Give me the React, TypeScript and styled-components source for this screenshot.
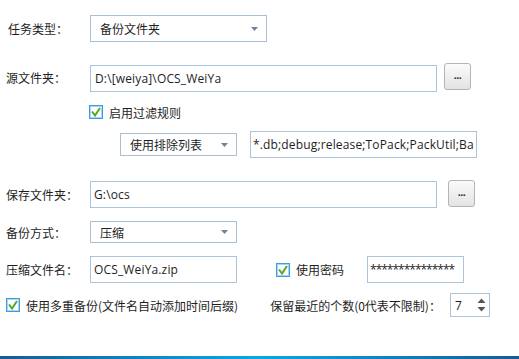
import React from "react";
import styled, { createGlobalStyle } from "styled-components";

const Global = createGlobalStyle`
  html, body { margin: 0; padding: 0; background: #fff; }
  body { font-family: "Open Sans", "Noto Sans CJK SC", sans-serif; font-size: 12px; color: #1e1e1e; }
  * { box-sizing: border-box; }
`;

const Page = styled.div`
  width: 519px;
  height: 359px;
  display: flex;
  flex-direction: column;
  padding-top: 15px;
  background: #fff;
  overflow: hidden;
`;

const Row = styled.div<{ $top?: number; $h: number; $pad?: number; $align?: string }>`
  display: flex;
  align-items: ${(p) => p.$align || "center"};
  margin-top: ${(p) => p.$top || 0}px;
  height: ${(p) => p.$h}px;
  padding-left: ${(p) => p.$pad ?? 6}px;
`;

const Label = styled.div<{ $indent?: number }>`
  width: 84px;
  padding-left: ${(p) => p.$indent || 0}px;
  font-family: "Noto Sans CJK SC", sans-serif;
  font-size: 12px;
  color: #1e1e1e;
  align-self: center;
  white-space: nowrap;
`;

const SelectBox = styled.div<{ $w: number; $h: number }>`
  width: ${(p) => p.$w}px;
  height: ${(p) => p.$h}px;
  border: 1px solid #aac0d6;
  background: #fff;
  display: flex;
  align-items: center;
  justify-content: space-between;
  padding: 0 8px 0 9px;
  font-family: "Noto Sans CJK SC", sans-serif;
  font-size: 12px;
  color: #1e1e1e;
  align-self: center;
`;

const Field = styled.input<{ $w: number; $h?: number; $pl?: number; $ml?: number; $ls?: number }>`
  width: ${(p) => p.$w}px;
  height: ${(p) => p.$h || 27}px;
  margin-left: ${(p) => p.$ml || 0}px;
  border: 1px solid #acc4da;
  background: #fff;
  padding: 0 2px 0 ${(p) => p.$pl ?? 3}px;
  font-family: "Open Sans", "Noto Sans CJK SC", sans-serif;
  font-size: 12px;
  letter-spacing: ${(p) => p.$ls ?? 0.15}px;
  color: #1e1e1e;
  outline: none;
  border-radius: 0;
  flex: none;
`;

const BrowseButton = styled.div<{ $ml: number }>`
  width: 27px;
  height: 27px;
  margin-left: ${(p) => p.$ml}px;
  align-self: flex-start;
  border: 1px solid #b4b4b4;
  border-radius: 3px;
  background: linear-gradient(#fbfbfb, #e3e3e3);
  display: flex;
  align-items: center;
  justify-content: center;
  font-family: "Liberation Sans", sans-serif;
  font-size: 11px;
  font-weight: bold;
  color: #333;
  letter-spacing: -0.5px;
  padding-bottom: 3px;
`;

const Check = styled.label<{ $ml?: number }>`
  display: flex;
  align-items: center;
  gap: 6px;
  margin-left: ${(p) => p.$ml || 0}px;
  font-family: "Noto Sans CJK SC", sans-serif;
  font-size: 12px;
  color: #1e1e1e;
  white-space: nowrap;
`;

const Text = styled.span<{ $ml?: number }>`
  margin-left: ${(p) => p.$ml || 0}px;
  font-family: "Noto Sans CJK SC", sans-serif;
  font-size: 12px;
  color: #1e1e1e;
  white-space: nowrap;
`;

const Spinner = styled.div<{ $ml: number }>`
  width: 40px;
  height: 24px;
  margin-left: ${(p) => p.$ml}px;
  border: 1px solid #acc4da;
  display: flex;
  align-items: center;
  justify-content: space-between;
  padding: 0 3px 0 4px;
  font-family: "Open Sans", sans-serif;
  font-size: 12px;
  color: #1e1e1e;
`;

const BottomBar = styled.div`
  margin-top: auto;
  height: 3px;
  background: linear-gradient(to right, #175b98, #0aa9df 50%, #175b98);
`;

const Arrow = () => (
  <svg width="7" height="4" viewBox="0 0 7 4">
    <path d="M0 0 H7 L3.5 4 Z" fill="#6f8296" />
  </svg>
);

const CheckMark = () => (
  <svg width="14" height="14" viewBox="0 0 14 14">
    <rect x="0.5" y="0.5" width="13" height="13" fill="#fff" stroke="#3c9de2" />
    <rect x="1.5" y="1.5" width="11" height="11" fill="none" stroke="#a9d4f2" />
    <path d="M3 6.5 L6 10.5 L11 3" fill="none" stroke="#56a52a" strokeWidth="2" />
  </svg>
);

const SpinArrows = () => (
  <svg width="9" height="16" viewBox="0 0 9 16">
    <path d="M0.5 6 L4.5 1.5 L8.5 6 Z" fill="#555" />
    <path d="M0.5 10 L4.5 14.5 L8.5 10 Z" fill="#555" />
  </svg>
);

export default function App() {
  return (
    <>
      <Global />
      <Page>
        <Row $h={27}>
          <Label $indent={2}>任务类型：</Label>
          <SelectBox $w={177} $h={27}>
            <span>备份文件夹</span>
            <Arrow />
          </SelectBox>
        </Row>

        <Row $top={21} $h={29} $align="flex-end">
          <Label>源文件夹：</Label>
          <Field $w={347} $pl={4} defaultValue="D:\[weiya]\OCS_WeiYa" readOnly />
          <BrowseButton $ml={7}>...</BrowseButton>
        </Row>

        <Row $top={13} $h={14} $pad={89}>
          <Check>
            <CheckMark />
            启用过滤规则
          </Check>
        </Row>

        <Row $top={12} $h={27} $pad={120}>
          <SelectBox $w={117} $h={23}>
            <span>使用排除列表</span>
            <Arrow />
          </SelectBox>
          <Field $w={227} $ml={13} $pl={2} defaultValue="*.db;debug;release;ToPack;PackUtil;BackupTool" readOnly />
        </Row>

        <Row $top={22} $h={28} $align="flex-end">
          <Label>保存文件夹：</Label>
          <Field $w={347} defaultValue="G:\ocs" readOnly />
          <BrowseButton $ml={11}>...</BrowseButton>
        </Row>

        <Row $top={13} $h={22}>
          <Label>备份方式：</Label>
          <SelectBox $w={147} $h={22}>
            <span>压缩</span>
            <Arrow />
          </SelectBox>
        </Row>

        <Row $top={13} $h={27}>
          <Label>压缩文件名：</Label>
          <Field $w={147} defaultValue="OCS_WeiYa.zip" readOnly />
          <Check $ml={39}>
            <CheckMark />
            使用密码
          </Check>
          <Field $w={97} $ml={23} $pl={2} $ls={-1} defaultValue="***************" readOnly />
        </Row>

        <Row $top={10} $h={24}>
          <Check>
            <CheckMark />
            使用多重备份(文件名自动添加时间后缀)
          </Check>
          <Text $ml={32}>保留最近的个数(0代表不限制)：</Text>
          <Spinner $ml={9}>
            <span>7</span>
            <SpinArrows />
          </Spinner>
        </Row>

        <BottomBar />
      </Page>
    </>
  );
}
